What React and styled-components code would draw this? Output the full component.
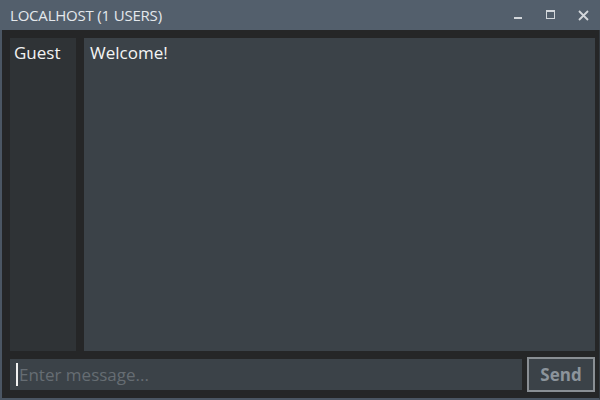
import React from "react";
import styled, { createGlobalStyle } from "styled-components";

const GlobalStyle = createGlobalStyle`
  html, body {
    margin: 0;
    padding: 0;
    background: #252627;
  }
  * {
    box-sizing: border-box;
  }
`;

const Window = styled.div`
  width: 600px;
  height: 400px;
  display: flex;
  flex-direction: column;
  background: #252627;
  font-family: "Open Sans", "Noto Sans", sans-serif;
  overflow: hidden;
`;

const TitleBar = styled.div`
  height: 30px;
  flex: none;
  display: flex;
  align-items: center;
  background: #535f6c;
  padding-left: 10px;
`;

const Title = styled.div`
  flex: 1;
  color: #e4e8ec;
  font-size: 15px;
  letter-spacing: -0.2px;
`;

const Controls = styled.div`
  display: flex;
  height: 100%;
`;

const ControlButton = styled.div`
  width: 33px;
  height: 100%;
  display: flex;
  align-items: center;
  justify-content: center;
  color: #d3d7db;
`;

const Body = styled.div`
  flex: 1;
  display: flex;
  flex-direction: column;
  gap: 6px;
  padding: 8px 4px 6px 8px;
  border-left: 2px solid #4b5663;
  border-bottom: 2px solid #4b5663;
  border-right: 1px solid #33393f;
`;

const Panels = styled.div`
  flex: 1;
  display: grid;
  grid-template-columns: 66px 1fr;
  gap: 8px;
`;

const UserList = styled.div`
  background: #2f3336;
  color: #f2f2f2;
  font-size: 17px;
  padding: 3px 4px;
`;

const Chat = styled.div`
  background: #3b4248;
  color: #f5f5f5;
  font-size: 17px;
  padding: 3px 6px;
`;

const InputRow = styled.div`
  display: flex;
  align-items: center;
  gap: 5px;
  height: 35px;
`;

const MessageInput = styled.div`
  flex: 1;
  height: 31px;
  background: #3b4248;
  display: flex;
  align-items: center;
  padding-left: 6px;
  font-size: 17px;
  color: #666d73;
`;

const Caret = styled.span`
  width: 2px;
  height: 23px;
  background: #f0f0f0;
  margin-right: 1px;
`;

const SendButton = styled.div`
  width: 68px;
  height: 35px;
  border: 2px solid #8a8f94;
  background: #3b4248;
  color: #8c949b;
  font-weight: 700;
  font-size: 17px;
  display: flex;
  align-items: center;
  justify-content: center;
`;

export default function App() {
  return (
    <>
      <GlobalStyle />
      <Window>
        <TitleBar>
          <Title>LOCALHOST (1 USERS)</Title>
          <Controls>
            <ControlButton>
              <svg width="10" height="10" viewBox="0 0 10 10">
                <rect x="1" y="7" width="8" height="2" fill="currentColor" />
              </svg>
            </ControlButton>
            <ControlButton>
              <svg width="10" height="10" viewBox="0 0 10 10">
                <rect x="0.5" y="0.5" width="8" height="8" fill="none" stroke="currentColor" />
                <rect x="0.5" y="0.5" width="8" height="1.5" fill="currentColor" />
              </svg>
            </ControlButton>
            <ControlButton>
              <svg width="11" height="11" viewBox="0 0 11 11">
                <path d="M1 1 L10 10 M10 1 L1 10" stroke="currentColor" strokeWidth="1.8" />
              </svg>
            </ControlButton>
          </Controls>
        </TitleBar>
        <Body>
          <Panels>
            <UserList>Guest</UserList>
            <Chat>Welcome!</Chat>
          </Panels>
          <InputRow>
            <MessageInput>
              <Caret />
              Enter message...
            </MessageInput>
            <SendButton>Send</SendButton>
          </InputRow>
        </Body>
      </Window>
    </>
  );
}
